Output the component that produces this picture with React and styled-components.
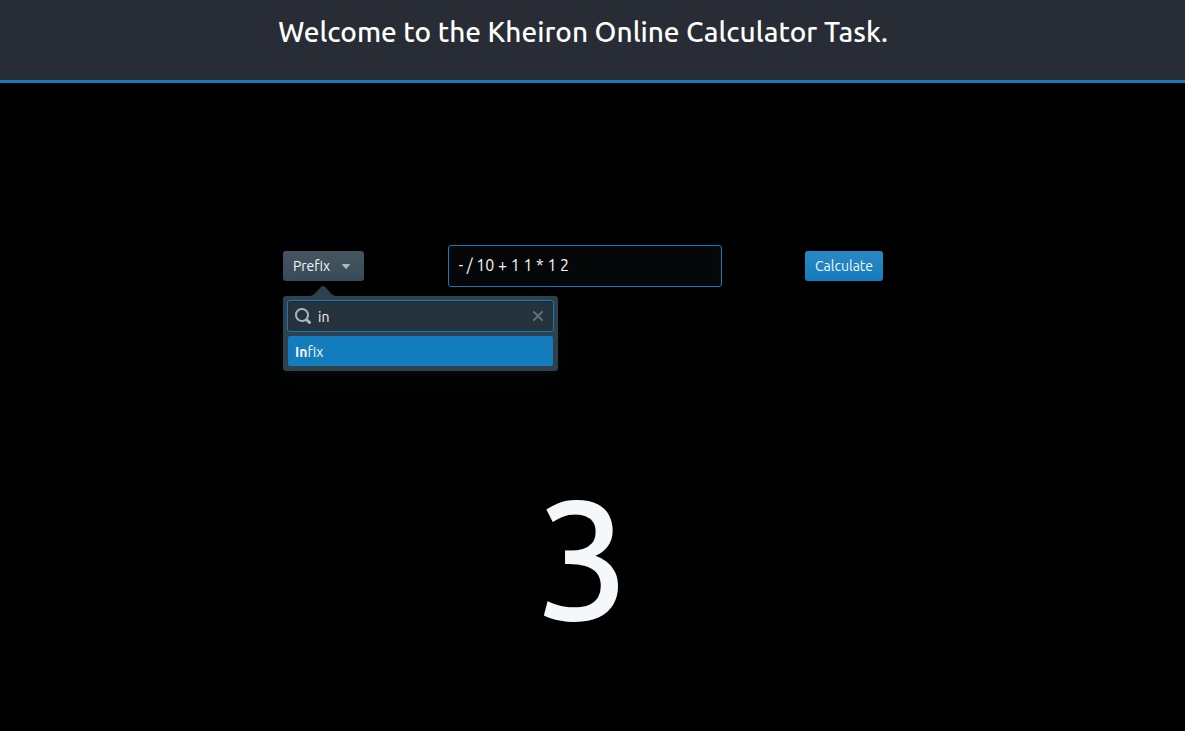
import React, { useState } from "react";
import styled, { createGlobalStyle } from "styled-components";

const GlobalStyle = createGlobalStyle`
  *, *::before, *::after { box-sizing: border-box; }
  body {
    margin: 0;
    background: #000;
    color: #f5f8fa;
    font-family: Ubuntu, "Noto Sans", sans-serif;
    font-size: 14px;
    line-height: 18px;
  }
  button, input { font: inherit; color: inherit; }
`;

const Header = styled.header`
  min-height: 83px;
  padding: 12px 19px 28px 0;
  background: #282c34;
  border-bottom: 3px solid #137cbd;
`;

const Title = styled.h1`
  margin: 0;
  color: #fff;
  font-size: 28px;
  font-weight: 500;
  line-height: 40px;
  text-align: center;
`;

const Main = styled.main`
  display: flex;
  flex-direction: column;
  align-items: center;
  padding: 162px 19px 0 0;
`;

const Controls = styled.form`
  display: flex;
  align-items: center;
  justify-content: space-between;
  width: 100%;
  max-width: 600px;
`;

const Button = styled.button`
  display: flex;
  align-items: center;
  justify-content: center;
  gap: 8px;
  min-width: ${(p) => (p.$primary ? 78 : 81)}px;
  height: 30px;
  padding: 0 9px;
  border: 0;
  border-radius: 3px;
  color: #f5f8fa;
  cursor: pointer;
  background: ${(p) =>
    p.$primary
      ? "linear-gradient(to bottom, #2b89c4, #137cbd)"
      : "linear-gradient(to bottom, #455561, #394b59)"};
`;

const SelectWrap = styled.div`
  position: relative;
`;

const Popover = styled.div`
  position: absolute;
  top: 45px;
  left: 0;
  display: flex;
  flex-direction: column;
  gap: 4px;
  width: 275px;
  padding: 4px 4px 5px;
  border-radius: 3px;
  background: #30404d;
  box-shadow: 0 2px 4px rgba(16, 22, 26, 0.4), 0 8px 24px rgba(16, 22, 26, 0.4);
`;

const Arrow = styled.svg`
  position: absolute;
  top: -10px;
  left: 25px;
  width: 30px;
  height: 30px;
  fill: #30404d;
  transform: rotate(90deg);
`;

const SearchBox = styled.label`
  position: relative;
  display: flex;
  align-items: center;
  gap: 7px;
  height: 32px;
  padding: 0 7px;
  border: 1px solid #137cbd;
  border-radius: 3px;
  background: #27333c;
  box-shadow: inset 0 1px 1px rgba(16, 22, 26, 0.4);
`;

const SearchInput = styled.input`
  flex: 1;
  min-width: 0;
  padding: 2px 0 0;
  border: 0;
  outline: 0;
  background: transparent;
`;

const ClearButton = styled.button`
  display: flex;
  padding: 0;
  border: 0;
  background: transparent;
  cursor: pointer;
`;

const Icon = styled.svg`
  flex: none;
  width: 16px;
  height: 16px;
  fill: ${(p) => p.$color};
`;

const Options = styled.ul`
  margin: 0;
  padding: 0 1px;
  list-style: none;
`;

const Option = styled.button`
  display: block;
  width: 100%;
  height: 30px;
  padding: 2px 7px 0;
  border: 0;
  border-radius: 2px;
  background: #137cbd;
  text-align: left;
  cursor: pointer;
`;

const Expression = styled.input`
  width: 274px;
  height: 42px;
  padding: 0 10px 2px;
  border: 1px solid #137cbd;
  border-radius: 3px;
  outline: 0;
  background: #050708;
  font-size: 16px;
`;

const Result = styled.output`
  margin-top: 162px;
  font-size: 168px;
  font-weight: 500;
  line-height: 216px;
`;

const PATHS = {
  search:
    "M15.55 13.43l-2.67-2.68a6.94 6.94 0 001.11-3.76c0-3.87-3.13-7-7-7s-7 3.13-7 7 3.13 7 7 7c1.39 0 2.68-.42 3.76-1.11l2.68 2.67a1.498 1.498 0 102.12-2.12zm-8.56-1.44c-2.76 0-5-2.24-5-5s2.24-5 5-5 5 2.24 5 5-2.24 5-5 5z",
  cross:
    "M9.41 8l3.29-3.29c.19-.18.3-.43.3-.71a1.003 1.003 0 00-1.71-.71L8 6.59l-3.29-3.3a1.003 1.003 0 00-1.42 1.42L6.59 8 3.3 11.29c-.19.18-.3.43-.3.71a1.003 1.003 0 001.71.71L8 9.41l3.29 3.29c.18.19.43.3.71.3a1.003 1.003 0 00.71-1.71L9.41 8z",
  caret:
    "M12 6.5c0-.28-.22-.5-.5-.5h-7a.495.495 0 00-.37.83l3.5 4c.09.1.22.17.37.17s.28-.07.37-.17l3.5-4c.08-.09.13-.2.13-.33z",
};

function Glyph({ name, color }) {
  return (
    <Icon viewBox="0 0 16 16" $color={color} aria-hidden="true">
      <path fillRule="evenodd" d={PATHS[name]} />
    </Icon>
  );
}

export default function App() {
  const [query, setQuery] = useState("in");
  const [expression, setExpression] = useState("- / 10 + 1 1 * 1 2");

  return (
    <>
      <GlobalStyle />
      <Header>
        <Title>Welcome to the Kheiron Online Calculator Task.</Title>
      </Header>
      <Main>
        <Controls onSubmit={(e) => e.preventDefault()}>
          <SelectWrap>
            <Button type="button" aria-haspopup="listbox" aria-expanded="true">
              Prefix
              <Glyph name="caret" color="#a7b6c2" />
            </Button>
            <Popover>
              <Arrow viewBox="0 0 30 30" aria-hidden="true">
                <path d="M8.11 6.302c1.015-.936 1.887-2.922 1.887-4.297v26c0-1.378-.868-3.357-1.888-4.297L.925 17.09c-1.237-1.14-1.233-3.034 0-4.17L8.11 6.302z" />
              </Arrow>
              <SearchBox>
                <Glyph name="search" color="#a7b6c2" />
                <SearchInput
                  aria-label="Filter"
                  value={query}
                  onChange={(e) => setQuery(e.target.value)}
                />
                <ClearButton type="button" aria-label="Clear" onClick={() => setQuery("")}>
                  <Glyph name="cross" color="#5c7080" />
                </ClearButton>
              </SearchBox>
              <Options>
                <li>
                  <Option type="button">
                    <strong>In</strong>fix
                  </Option>
                </li>
              </Options>
            </Popover>
          </SelectWrap>
          <Expression
            aria-label="Expression"
            value={expression}
            onChange={(e) => setExpression(e.target.value)}
          />
          <Button type="submit" $primary>
            Calculate
          </Button>
        </Controls>
        <Result>3</Result>
      </Main>
    </>
  );
}
